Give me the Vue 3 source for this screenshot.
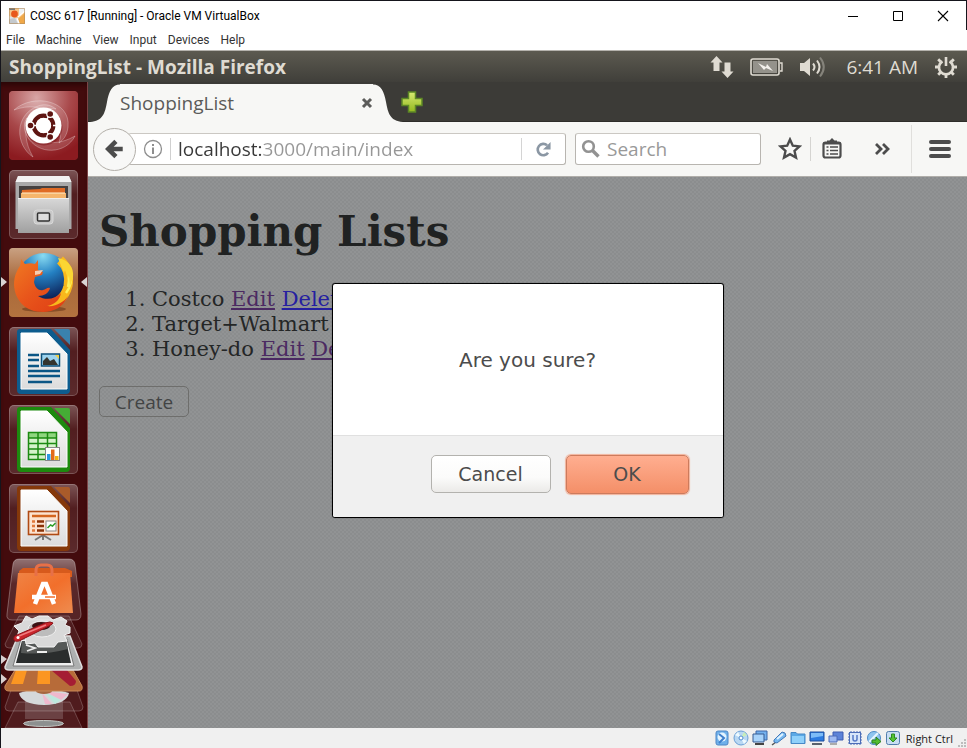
<script setup>
import { ref } from 'vue'

const menus = ['File', 'Machine', 'View', 'Input', 'Devices', 'Help']
const address = ref('localhost:3000/main/index')
const query = ref('')
const lists = [
  { id: 1, name: 'Costco', deleteSeen: false },
  { id: 2, name: 'Target+Walmart', deleteSeen: false },
  { id: 3, name: 'Honey-do', deleteSeen: true },
]
</script>

<template>
  <div class="window">
    <header class="titlebar">
      <svg class="vm-icon" viewBox="0 0 16 16" aria-hidden="true">
        <rect width="16" height="16" fill="#dfe3e6" />
        <path d="M0 0h16v6L9 11 0 8z" fill="#f5c68b" />
        <path d="M10 0h6v3l-6 5z" fill="#eef1f3" />
        <path d="M16 5v11h-5l-2-5z" fill="#f0a848" />
        <path d="M0 11l6-1 3 6H0z" fill="#c4c9cd" />
        <circle cx="5.500" cy="6" r="3.400" fill="#e8591c" />
        <path d="M0 0h6v2H0z" fill="#777" />
        <path d="M9 9l7-6M8 10l2 6" stroke="#fff" stroke-width="1.200" />
        <path d="M.5.5h15v15H.5z" fill="none" stroke="#b08a5c" stroke-opacity=".6" />
      </svg>
      <span class="vm-title">COSC 617 [Running] - Oracle VM VirtualBox</span>
      <div class="caption-buttons">
        <button aria-label="Minimize"><svg viewBox="0 0 12 12"><path d="M1 6.500h10" stroke="#000" /></svg></button>
        <button aria-label="Maximize"><svg viewBox="0 0 12 12"><path d="M1.500 1.500h9v9h-9z" stroke="#000" fill="none" /></svg></button>
        <button aria-label="Close"><svg viewBox="0 0 12 12"><path d="M1 1l10 10M11 1L1 11" stroke="#000" stroke-width="1.100" /></svg></button>
      </div>
    </header>
    <nav class="menubar" aria-label="Machine menu">
      <button v-for="m in menus" :key="m">{{ m }}</button>
    </nav>

    <div class="panel">
      <span class="panel-title">ShoppingList - Mozilla Firefox</span>
      <div class="indicators">
        <svg width="24" height="24" viewBox="0 0 24 24" fill="#dfdbd2" aria-label="Network">
          <path d="M6.500 1l6 6.500H9.500V16h-6V7.500H.5zM17.500 23l6-6.500H20.500V7.500h-6v9h-3z" />
        </svg>
        <svg width="33" height="18" viewBox="0 0 33 18" aria-label="Battery">
          <rect x="1" y="1" width="28" height="16" rx="2" fill="none" stroke="#dfdbd2" stroke-width="1.600" />
          <rect x="3" y="3" width="24" height="12" fill="#94928b" />
          <path d="M30 5h2v8h-2" fill="none" stroke="#dfdbd2" stroke-width="1.400" />
          <path d="M8 5l8 4 1-3 6 7-7-3-2 2z" fill="#f3f1ec" />
        </svg>
        <svg width="27" height="24" viewBox="0 0 27 24" fill="none" aria-label="Volume">
          <path d="M1 8h4l6-5v18l-6-5H1z" fill="#dfdbd2" />
          <path d="M14 8.500q3 3.500 0 7M18 5.500q5 6.500 0 13" stroke="#dfdbd2" stroke-width="2" />
          <path d="M21 2.500q7.500 9.500 0 19" stroke="#85837b" stroke-width="2" />
        </svg>
        <span class="clock">6:41 AM</span>
        <svg width="24" height="24" viewBox="0 0 24 24" fill="none" stroke="#dfdbd2" aria-label="Session">
          <path d="M8.500 6.300a7 7 0 1 0 7 0" stroke-width="2.600" />
          <path d="M12 2v9" stroke-width="2.600" />
          <path d="M12 19.500V23M1 12h3.500M19.500 12H23M4.200 4.200l2.500 2.500M19.800 4.200l-2.500 2.500M4.200 19.800l2.500-2.500M19.800 19.800l-2.500-2.500" stroke-width="2.800" />
        </svg>
      </div>
    </div>

    <div class="desktop">
      <aside class="launcher" aria-label="Launcher">
        <ul>
          <li>
            <button class="tile dash" aria-label="Dash">
              <svg viewBox="0 0 69 69">
                <defs>
                  <radialGradient id="dash-glow" cx=".4" cy=".1" r=".9">
                    <stop offset="0" stop-color="#d8a5a5" /><stop offset=".55" stop-color="#a8484a" /><stop offset="1" stop-color="#8c1b20" />
                  </radialGradient>
                </defs>
                <rect width="69" height="69" rx="4" fill="url(#dash-glow)" />
                <g fill="#fff" fill-opacity=".14" stroke="#fff" stroke-opacity=".28">
                  <path d="M5 19C24 2 62 9 59 36c-1 9-5 13-9 16 8-25-16-44-45-33z" />
                  <path d="M24 66C6 54 5 24 29 15c8-3 14 0 18 3-24-4-40 18-23 48z" />
                  <path d="M66 45c-9 18-37 20-48 0-4-8-3-14 0-18 0 18 20 34 48 18z" />
                </g>
                <circle cx="35" cy="36" r="18.500" fill="#7a1417" fill-opacity=".5" />
                <circle cx="34.500" cy="34.500" r="18" fill="#fff" />
                <circle cx="34.500" cy="34.500" r="9.800" fill="none" stroke="#5e1512" stroke-width="4.200" />
                <g stroke="#fff" stroke-width="1.500"><path d="M20 34.500h9M37 30l5-9M37 39l5 9M44 34.500h4" /></g>
                <circle cx="34.500" cy="34.500" r="7.500" fill="#fff" />
                <g fill="#5e1512" stroke="#fff" stroke-width="1.200"><circle cx="21.500" cy="34.500" r="3.400" /><circle cx="41.200" cy="23" r="3.400" /><circle cx="41.200" cy="46" r="3.400" /></g>
              </svg>
            </button>
          </li>
          <li>
            <button class="tile" aria-label="Files">
              <svg viewBox="0 0 69 69">
                <defs>
                  <linearGradient id="drawer" x2="0" y2="1"><stop stop-color="#d8d8d8" /><stop offset="1" stop-color="#a0a0a0" /></linearGradient>
                </defs>
                <path d="M9 6h51l2.500 6v47H6.500V12z" fill="#a9a9a9" />
                <path d="M9 6h51l2.500 6h-56z" fill="#f2f2f2" />
                <path d="M10 16h49v14H10z" fill="#454140" />
                <path d="M13 20l18-1 2-1h23v11H12z" fill="#df6b25" />
                <path d="M12 23h45v6H12z" fill="#f5b56c" /><path d="M13 23h43" stroke="#fff2cf" />
                <path d="M9 28l3 1h45l3-1v35H9z" fill="url(#drawer)" />
                <path d="M9 28.500h51" stroke="#eee" />
                <rect x="25" y="40" width="19" height="14" rx="3" fill="#c9c9c9" stroke="#d8d8d8" />
                <rect x="28.500" y="43" width="12" height="8" rx="1" fill="#ddd" stroke="#333" stroke-width="1.500" />
              </svg>
            </button>
          </li>
          <li class="running focused">
            <button class="tile firefox" aria-label="Firefox">
              <svg viewBox="0 0 69 69">
                <defs>
                  <linearGradient id="ff-tile" x2="0" y2="1"><stop stop-color="#c9a182" /><stop offset=".45" stop-color="#a8683a" /><stop offset="1" stop-color="#b3733f" /></linearGradient>
                  <radialGradient id="globe" cx=".48" cy=".05" r=".8"><stop stop-color="#8adcf2" /><stop offset=".45" stop-color="#2480c2" /><stop offset="1" stop-color="#0c2259" /></radialGradient>
                  <linearGradient id="fox" x1="0" y1="0" x2="1" y2="1"><stop stop-color="#f07a22" /><stop offset=".5" stop-color="#e8541b" /><stop offset="1" stop-color="#dd3c14" /></linearGradient>
                </defs>
                <ellipse cx="35" cy="60" rx="24" ry="4" fill="#5d2d12" opacity=".5" />
                <rect width="69" height="69" rx="4" fill="url(#ff-tile)" />
                <ellipse cx="35" cy="61" rx="22" ry="3" fill="#5d2d12" opacity=".5" />
                <circle cx="35" cy="32" r="27" fill="url(#globe)" />
                <path d="M51 12c7 6 10 16 8 26-3 12-12 19-23 19" fill="none" stroke="#f8b81c" stroke-width="9" />
                <path d="M54 15c6 8 7 16 5 24M62 25c1 9-1 15-5 20" fill="none" stroke="#fdf05c" stroke-width="2.500" />
                <path d="M49 10l6 15 1-3 3 9 1-4 1 11 3-9c1-9-4-17-15-19z" fill="#fbd633" />
                <path d="M5 37c0-9 3-15 6-19l1-7 4 5c4-1 7-1 10 0l3-4v10l5 2-1 3-7 2-1 5c1 6 5 9 9 8 3 0 4-3 7-2-1 5-6 8-12 8 8 5 17 3 23-3-1 7-7 12-14 13 9 1 17-4 21-10-5 11-14 16-25 16C17 64 6 53 5 37z" fill="url(#fox)" />
                <path d="M26 23l8-1-3 4-5 1z" fill="#f7cdb0" />
              </svg>
            </button>
          </li>
          <li>
            <button class="tile" aria-label="LibreOffice Writer">
              <svg viewBox="0 0 69 69">
                <defs><linearGradient id="paper" x2="0" y2="1"><stop stop-color="#fff" /><stop offset="1" stop-color="#dcdcdc" /></linearGradient></defs>
                <path d="M11 2h31l19 21v40a4 4 0 0 1-4 4H12a4 4 0 0 1-4-4V5a3 3 0 0 1 3-3z" fill="#0d5c8e" />
                <path d="M12 6h26l20 21v35H12z" fill="url(#paper)" stroke="#fff" />
                <path d="M45 2h14a2 2 0 0 1 2 2v14z" fill="#3a82ae" />
                <path d="M19 28h11M19 33h11M19 39h11M19 44h32M19 49h32M19 55h24" stroke="#0b5685" stroke-width="2.600" />
                <rect x="32.500" y="27" width="18" height="12" fill="#9cd3ee" stroke="#0b4f7a" stroke-width="1.500" />
                <path d="M34 38v-4l4-4 3 4 4-2 4 6z" fill="#34352f" /><path d="M46 28h4v4z" fill="#f2cf45" />
              </svg>
            </button>
          </li>
          <li>
            <button class="tile" aria-label="LibreOffice Calc">
              <svg viewBox="0 0 69 69">
                <path d="M11 2h31l19 21v40a4 4 0 0 1-4 4H12a4 4 0 0 1-4-4V5a3 3 0 0 1 3-3z" fill="#1d8a0e" />
                <path d="M12 6h26l20 21v35H12z" fill="url(#paper)" stroke="#fff" />
                <path d="M45 3h14a2 2 0 0 1 2 2v14z" fill="#45ad35" />
                <path d="M19 27h29v28H19z" fill="#d5f3ca" /><path d="M19 27h29v6H19z" fill="#8fd67f" />
                <path d="M19.500 27.500h28v27h-28zM29 27v28M38.500 27v28M19 33h29M19 38.500h29M19 44h29M19 49.500h29" fill="none" stroke="#1c8a12" stroke-width="1.500" />
                <rect x="36.500" y="42.500" width="14" height="13" fill="#fff" stroke="#888" />
                <path d="M38 49h3.500v6H38z" fill="#2b98e0" /><path d="M42 44.500h3.500V55H42z" fill="#e26a1b" /><path d="M46 51h3.500v4H46z" fill="#f0b414" />
              </svg>
            </button>
          </li>
          <li>
            <button class="tile" aria-label="LibreOffice Impress">
              <svg viewBox="0 0 69 69">
                <path d="M11 2h31l19 21v40a4 4 0 0 1-4 4H12a4 4 0 0 1-4-4V5a3 3 0 0 1 3-3z" fill="#85380a" />
                <path d="M12 6h26l20 21v35H12z" fill="url(#paper)" stroke="#fff" />
                <path d="M45 3h14a2 2 0 0 1 2 2v14z" fill="#a95b2a" />
                <path d="M34 50v6M34 51l-8 5M34 51l8 5" stroke="#777" stroke-width="2" />
                <rect x="19.500" y="27.500" width="30" height="23" fill="#fde3d0" stroke="#b04a14" stroke-width="1.600" />
                <path d="M23 32h24" stroke="#d4651f" stroke-width="2.500" />
                <path d="M23 37.500h3M23 42h3M23 46.500h3" stroke="#e0783a" stroke-width="2.500" />
                <path d="M28 37.500h7M28 42h7M28 46.500h7" stroke="#8a3206" stroke-width="2.500" />
                <rect x="37" y="37" width="10" height="10" fill="#fff" stroke="#888" />
                <path d="M38.500 44l3-3 2 1 3-3" stroke="#31a02c" stroke-width="1.500" fill="none" />
              </svg>
            </button>
          </li>
        </ul>
        <button class="stack" aria-label="More applications">
          <svg viewBox="0 0 86 170">
            <defs>
              <linearGradient id="bag" x2="1" y2="1"><stop stop-color="#ef8446" /><stop offset=".5" stop-color="#f26f2b" /><stop offset="1" stop-color="#ee8c50" /></linearGradient>
              <linearGradient id="sheen" x2="0" y2="1"><stop stop-color="#fff" stop-opacity=".42" /><stop offset=".4" stop-color="#fff" stop-opacity=".12" /><stop offset="1" stop-color="#fff" stop-opacity=".1" /></linearGradient>
            </defs>
            <g stroke="#fff" stroke-opacity=".22" fill="#fff" fill-opacity=".07">
              <path d="M17 144h52l12 26H4z" />
              <path d="M16 115h54l12 34q0 4-4 4H8q-4 0-4-4z" />
              <path d="M18 58h50l13 28q0 4-4 4H8q-4 0-4-4z" />
            </g>
            <path d="M24 130h38v31H24z" fill="#d9d9d9" opacity=".2" />
            <ellipse cx="42.500" cy="165.500" rx="20" ry="3" fill="#8d9090" stroke="#c5c9c6" />
            <path d="M18 135q25-8 50 0c-1 7-10 12-25 12s-24-5-25-12z" fill="#d5d9da" />
            <path d="M43 133l24 3-7 6zM41 135l10 11h-7z" fill="#efb9cd" /><path d="M43 134l17 8-6 4z" fill="#bce8dd" />
            <ellipse cx="43" cy="133" rx="8" ry="3" fill="#a5673f" />
            <path d="M14 112h58l9 16q1 5-3 5H8q-5 0-4-5z" fill="#b76b39" stroke="#c98a59" />
            <path d="M15 112h11l-4 14H10zM37 112h12v14H36z" fill="#fb9622" />
            <path d="M50 112h16l9 11q0 5-6 5z" fill="#a51d34" />
            <path d="M17 78h52l12 31q0 3-4 3H8q-4 0-4-3z" fill="#aeb0b0" stroke="#dedede" stroke-width="1.500" />
            <path d="M20 81h46l7 27H12z" fill="#efefef" stroke="#777" />
            <path d="M21 83h44l5 22H15z" fill="#2a2d2d" /><path d="M21 83h44l2 8q-23 6-47 4z" fill="#555857" />
            <path d="M25 87l9 3-8 3M36 94h10" stroke="#eee" stroke-width="1.800" fill="none" />
            <g transform="translate(0 11)">
              <path d="M25 47l6 3 7-3 9 0 5 4 8-3 6 4-2 4 5 2v6l-6 2 3 6-9 1-4 5H37l-3-4-9 1-1-6-8-2 2-5-5-5 8-3z" fill="#d9d9d9" stroke="#f3f3f3" />
              <ellipse cx="41" cy="60" rx="14" ry="8" fill="#bcbcbc" stroke="#eee" /><ellipse cx="40" cy="57" rx="9" ry="4" fill="#3b1013" />
            </g>
            <g transform="translate(0 7)">
              <path d="M48 61L18 76q-4 1-5-1-1-4 3-5l28-12q6-2 8 0 0 1-4 3z" fill="#c9252c" stroke="#8c1218" /><path d="M18 71l27-11" stroke="#f07d80" stroke-width="1.500" /><circle cx="17" cy="72.500" r="1.500" fill="#fff" />
            </g>
            <path d="M18 1h50q5 0 6 5l6 50q0 6-5 6H11q-6 0-5-6l6-50q1-5 6-5z" fill="url(#sheen)" stroke="#fff" stroke-opacity=".3" />
            <path d="M18 13l4-3h42l7 3v6H18z" fill="#d75a1c" />
            <path d="M17 15h52l3 40H13z" fill="url(#bag)" />
            <path d="M35 18v-6q0-5 5-5h6q5 0 5 5v6" fill="none" stroke="#e77048" stroke-width="3" />
            <path d="M34 46l8-20h3l8 20M31 39h24" fill="none" stroke="#fff" stroke-width="4.500" /><path d="M32 39h22" stroke="#f26f2b" stroke-width="1.500" /><path d="M32 39h12" stroke="#fff" stroke-width="3" />
            <path d="M0 97l6 4-6 5zM0 116l6 5-6 5z" fill="#d9cfcf" />
          </svg>
        </button>
      </aside>

      <section class="browser">
        <div class="tabs">
          <div class="tab">
            <svg class="curve" viewBox="0 0 30 38" aria-hidden="true"><path d="M0 38C13 37 15 29 17 18S22 .5 30 .5V38z" fill="#f7f7f5" /></svg>
            <div class="tab-body">
              <span>ShoppingList</span>
              <button class="close-tab" aria-label="Close tab"><svg viewBox="0 0 12 12"><path d="M2 2l8 8M10 2l-8 8" stroke="#5c5c5a" stroke-width="3" /></svg></button>
            </div>
            <svg class="curve" viewBox="0 0 30 38" aria-hidden="true"><path d="M30 38C17 37 15 29 13 18S8 .5 0 .5V38z" fill="#f7f7f5" /></svg>
          </div>
          <button class="new-tab" aria-label="New tab">
            <svg viewBox="0 0 22 22">
              <defs><linearGradient id="plus" x2="0" y2="1"><stop stop-color="#d8ea72" /><stop offset="1" stop-color="#93b81e" /></linearGradient></defs>
              <path d="M7.500 1h7v6.500H21v7h-6.500V21h-7v-6.500H1v-7h6.500z" fill="url(#plus)" stroke="#5c8726" stroke-width="1.500" />
            </svg>
          </button>
        </div>

        <div class="toolbar">
          <button class="back" aria-label="Back"><svg viewBox="0 0 22 22"><path d="M12 2.500L3.500 11l8.500 8.500M4 11h15.500" fill="none" stroke="#4c4c4c" stroke-width="5" /></svg></button>
          <div class="address">
            <svg class="info" viewBox="0 0 20 20" fill="none" stroke="#8e8e8e" aria-hidden="true"><circle cx="10" cy="10" r="8.500" stroke-width="1.300" /><path d="M10 8.500V15M10 5v2" stroke-width="2" /></svg>
            <input v-model="address" type="text" aria-label="Address">
            <button class="reload" aria-label="Reload"><svg viewBox="0 0 18 18"><path d="M13.800 12.500a6 6 0 1 1-1-8" fill="none" stroke="#8b97a4" stroke-width="2.800" /><path d="M16.500 1v8h-8z" fill="#8b97a4" /></svg></button>
          </div>
          <label class="search">
            <svg viewBox="0 0 20 20" fill="none" stroke="#929292" aria-hidden="true"><circle cx="7.500" cy="7.500" r="5.300" stroke-width="2.600" /><path d="M11.500 11.500l6 6" stroke-width="3.400" /></svg>
            <input v-model="query" type="search" placeholder="Search" aria-label="Search">
          </label>
          <button class="tool star" aria-label="Bookmark"><svg viewBox="0 0 24 24"><path d="M12 2.500l2.800 6.200 6.700.7-5 4.500 1.500 6.700-6-3.500-6 3.500 1.500-6.700-5-4.500 6.700-.7z" fill="none" stroke="#4c4c4c" stroke-width="2.400" /></svg></button>
          <button class="tool clip" aria-label="Show bookmarks"><svg viewBox="0 0 24 24" fill="none" stroke="#4c4c4c"><rect x="3.500" y="5.500" width="17" height="15" rx="2" stroke-width="2.200" /><path d="M7 5.500V3.500h2.500L12 1l2.500 2.500H17v2z" fill="#4c4c4c" stroke="none" /><path d="M3 6.500h18" stroke-width="2" /><path d="M6.500 10h2M10 10h8M6.500 13.500h2M10 13.500h8M6.500 17h2M10 17h8" stroke-width="1.600" /></svg></button>
          <button class="tool more" aria-label="More tools"><svg viewBox="0 0 24 24"><path d="M5 7l5 5-5 5M12 7l5 5-5 5" fill="none" stroke="#4c4c4c" stroke-width="2.800" /></svg></button>
          <button class="tool burger" aria-label="Open menu"><svg viewBox="0 0 24 24"><path d="M3 5h18M3 12h18M3 19h18" stroke="#4c4c4c" stroke-width="4" stroke-linecap="round" /></svg></button>
        </div>

        <div class="viewport">
          <main>
            <h1>Shopping Lists</h1>
            <ol>
              <li v-for="l in lists" :key="l.id">
                {{ l.name }} <a href="#edit">Edit</a> <a href="#delete" :class="{ fresh: !l.deleteSeen }">Delete</a>
              </li>
            </ol>
            <button class="create">Create</button>
          </main>
          <div class="overlay">
            <div class="dialog" role="alertdialog" aria-modal="true" aria-labelledby="question">
              <p id="question">Are you sure?</p>
              <div class="actions">
                <button>Cancel</button>
                <button class="ok">OK</button>
              </div>
            </div>
          </div>
        </div>
      </section>
    </div>

    <footer class="statusbar">
      <svg viewBox="0 0 16 16"><rect x="2" y="1" width="12" height="14" rx="2" fill="#6fb0ea" stroke="#4c86c6" /><circle cx="8" cy="7" r="4.500" fill="#e4f4ff" /><path d="M5 4l5 4-5 5" stroke="#3f7fcc" stroke-width="2" fill="none" /></svg>
      <svg viewBox="0 0 16 16"><circle cx="8" cy="8" r="7" fill="#b9d8f3" stroke="#6a9fd6" /><path d="M8 8L2 5l3-3zM8 8l6 3-3 3z" fill="#eefaff" /><path d="M8 8l3-6 3 3z" fill="#c8edb8" /><circle cx="8" cy="8" r="2" fill="#fff" stroke="#4d8bd0" /></svg>
      <svg viewBox="0 0 16 16"><path d="M4 1h11v9H4z" fill="#74b1ee" stroke="#3c67a8" /><path d="M1 4h11v8H1z" fill="#a8d3fb" stroke="#365a91" /><path d="M3 14h9" stroke="#444" stroke-width="2" /></svg>
      <svg viewBox="0 0 16 16"><path d="M1 15l4-3" stroke="#555" stroke-width="1.500" /><path d="M3 10L11 2l3 1 1 3-9 7-3-1z" fill="#75b8f0" stroke="#4479b8" /><path d="M6 9l6-5" stroke="#dff2ff" stroke-width="2" /></svg>
      <svg viewBox="0 0 16 16"><path d="M1 4V2.500h5L7.500 4H15v9.500H1z" fill="#5ba9e6" stroke="#4789c6" /><path d="M2 6h12v7H2z" fill="#8fd0fa" /></svg>
      <svg viewBox="0 0 16 16"><path d="M1 2h14v9H1z" fill="#2d7be0" stroke="#1f4f9b" /><path d="M2 3h12v3L2 8z" fill="#7dbcf8" /><path d="M3 14h10" stroke="#59616c" stroke-width="2" /></svg>
      <svg viewBox="0 0 16 16"><path d="M5 2h10v8H5z" fill="#5d83d8" stroke="#3f5cb0" /><path d="M1 6h8v6H1z" fill="#9db9f2" stroke="#4d6ab8" /><path d="M2 14h7" stroke="#666" /></svg>
      <svg viewBox="0 0 16 16"><path d="M1 4h14M1 7h14M1 10h14M1 13h14M4 1v14M7 1v14M10 1v14M13 1v14" stroke="#496dba" /><rect x="2.500" y="2.500" width="11" height="11" fill="#d7e6fa" stroke="#4c6db7" /><path d="M6 5v4q0 2 2 2t2-2V5" fill="none" stroke="#5679c6" stroke-width="1.500" /></svg>
      <svg viewBox="0 0 16 16"><circle cx="8" cy="8" r="6.500" fill="#8fc5ef" stroke="#4d8ac7" /><path d="M3 12L12 3" stroke="#e8f6ff" stroke-width="2" /><path d="M6 10h4V7l5 4.500-5 4V13H6z" fill="#52bd2f" stroke="#2a8022" /></svg>
      <svg viewBox="0 0 16 16"><rect x="1.500" y="1.500" width="13" height="13" rx="2" fill="#c8ddf3" stroke="#527dac" /><path d="M6.500 4h3v4H12l-4 4-4-4h2.500z" fill="#56c234" stroke="#2b8b20" /></svg>
      <span class="host-key">Right Ctrl</span>
      <svg class="grip" viewBox="0 0 10 10" fill="#bdbdbd"><path d="M7 1h2v2H7zM7 4h2v2H7zM4 4h2v2H4zM7 7h2v2H7zM4 7h2v2H4zM1 7h2v2H1z" /></svg>
    </footer>
  </div>
</template>

<style>
body { margin: 0; }
</style>

<style scoped>
* { box-sizing: border-box; }
button { border: 0; padding: 0; margin: 0; background: none; font: inherit; color: inherit; }
svg { display: block; }

.window {
  min-height: 100vh;
  display: flex;
  flex-direction: column;
  border-top: 1px solid #15151c;
  border-left: 1px solid #15151c;
  background: #fff;
  font-family: "Open Sans", "Noto Sans", sans-serif;
}
.titlebar { display: flex; align-items: center; height: 29px; padding-left: 8px; border-right: 1px solid #15151c; font: 12px Roboto, "Open Sans", sans-serif; color: #000; }
.vm-icon { width: 16px; height: 16px; margin-right: 5px; }
.caption-buttons { display: flex; margin-left: auto; padding-right: 1px; }
.caption-buttons button { display: grid; place-items: center; width: 45px; height: 28px; }
.caption-buttons svg { width: 12px; height: 12px; }
.menubar { display: flex; align-items: center; gap: 11px; height: 20px; padding-left: 5px; font: 12px/20px Roboto, "Open Sans", sans-serif; color: #333; }

.panel { display: flex; align-items: center; justify-content: space-between; height: 32px; padding: 0 9px 0 8px; border-top: 1px solid #b5b3ad; background: linear-gradient(#5c5a50, #403f3a); color: #dfdbd2; }
.panel-title { font-size: 19px; font-weight: 700; }
.indicators { display: flex; align-items: center; gap: 16px; }
.clock { font-size: 19px; margin-left: 4px; }

.desktop { flex: 1; display: flex; }
.launcher { display: flex; flex-direction: column; width: 87px; flex: none; background: #430b0d; border-right: 1px solid #7c4446; box-shadow: inset 0 6px 5px -3px #2a0606; }
.launcher ul { flex: 1; display: flex; flex-direction: column; justify-content: space-between; list-style: none; margin: 0; padding: 9px 0 5px; }
.launcher li { padding-left: 8px; position: relative; }
.tile { display: block; width: 69px; height: 69px; border-radius: 5px; background: linear-gradient(rgba(255, 255, 255, .3), rgba(255, 255, 255, .08) 35%, rgba(255, 255, 255, .13)); box-shadow: inset 0 0 0 1px rgba(255, 255, 255, .2); }
.tile svg { width: 69px; height: 69px; }
.running::before, .focused::after { content: ""; position: absolute; top: 29px; border: 5px solid transparent; }
.running::before { left: 0; border-left: 6px solid #d9d4d4; border-right: 0; }
.focused::after { right: 0; border-right: 6px solid #d9d4d4; border-left: 0; }
.stack svg { width: 86px; height: 170px; }

.browser { flex: 1; min-width: 0; display: flex; flex-direction: column; }
.tabs { display: flex; align-items: flex-end; height: 40px; padding-left: 2px; background: #3c3b37; border-bottom: 1px solid #2e2d2a; }
.tab { display: flex; flex: 0 1 313px; height: 38px; margin-bottom: -1px; }
.curve { width: 30px; height: 38px; flex: none; }
.tab-body { flex: 1; display: flex; align-items: center; justify-content: space-between; background: #f7f7f5; color: #5b5b59; font-size: 19px; }
.close-tab svg { width: 12px; height: 12px; }
.new-tab { height: 38px; padding-bottom: 1px; margin-left: -2px; }
.new-tab svg { width: 22px; height: 22px; }

.toolbar { display: flex; align-items: center; height: 55px; padding: 0 0 0 5px; background: #f7f7f5; border-bottom: 1px solid #b0aeaa; }
.back { display: grid; place-items: center; width: 43px; height: 43px; flex: none; border: 1px solid #b3afa9; border-radius: 50%; background: #f8f8f7; z-index: 1; }
.back svg { width: 20px; height: 20px; }
.address, .search { display: flex; align-items: center; height: 32px; border: 1px solid #b8b5b0; border-top-color: #cbc8c3; border-radius: 3px; background: #fff; }
.address { flex: 1; margin-left: -8px; padding-left: 14px; }
.info { width: 20px; height: 20px; flex: none; margin-right: 7px; }
.address input, .search input { min-width: 0; border: 0; padding: 0; outline: 0; background: none; font: 19px/28px "Open Sans", "Noto Sans", sans-serif; }
.address input { flex: 1; height: 22px; border-left: 1px solid #d0d0d0; padding-left: 7px; color: transparent; background: linear-gradient(90deg, #383838 92px, #979797 92px) text; }
.reload { display: grid; place-items: center; width: 44px; height: 22px; border-left: 1px solid #d4d4d4; }
.reload svg { width: 17px; height: 17px; }
.search { width: 186px; margin: 0 17px 0 9px; padding-left: 5px; }
.search svg { width: 20px; height: 20px; flex: none; margin-right: 6px; }
.search input { flex: 1; color: #444; }
.search input::placeholder { color: #999; opacity: 1; }
.tool { display: grid; place-items: center; height: 24px; }
.tool svg { width: 24px; height: 24px; }
.star { width: 33px; border-right: 1px solid #d5d4d1; padding-right: 8px; }
.clip { width: 41px; }
.more { width: 59px; padding-left: 3px; }
.burger { width: 56px; height: 48px; border-left: 1px solid #e0dfdc; }

.viewport { position: relative; flex: 1; background: repeating-conic-gradient(#8b8d8e 0 25%, #919394 0 50%) 0 0 / 4px 4px; }
main { padding: 29px 11px; font-family: "DejaVu Serif", serif; font-size: 21px; line-height: 25px; color: #242626; }
h1 { margin: 0; font-size: 42px; line-height: 52px; font-weight: 700; color: #202222; }
ol { margin: 29px 0 24px; padding-left: 53px; }
a { color: #4b2a62; }
a.fresh { color: #2520a0; }
.create { display: block; width: 90px; height: 31px; border: 1px solid #6e6e6c; border-radius: 5px; font: 19px "Open Sans", "Noto Sans", sans-serif; color: #424444; }
.overlay { position: absolute; inset: 0; display: flex; justify-content: center; align-items: flex-start; padding-top: 106px; }
.dialog { width: 392px; border: 1px solid #000; border-radius: 3px; background: #fff; font-family: "DejaVu Sans", sans-serif; color: #4c4c4c; box-shadow: 0 0 1px #333; overflow: hidden; }
.dialog p { margin: 0; padding: 64px 0 63px; font-size: 20px; line-height: 24px; text-align: center; }
.actions { display: flex; justify-content: flex-end; align-items: center; gap: 15px; height: 82px; padding: 0 34px 5px; border-top: 1px solid #e0e0e0; background: #f0f0f0; font-size: 19px; }
.actions button { width: 120px; height: 38px; border: 1px solid #b3b2ae; border-radius: 5px; background: linear-gradient(#fff, #fbfbfa 60%, #ebeae8); }
.actions .ok { width: 123px; height: 39px; border: 1px solid #cd7b5c; background: linear-gradient(#ffae90, #f48f68); box-shadow: 0 0 1px 1px #f2b29b; }

.statusbar { display: flex; align-items: center; justify-content: flex-end; gap: 3px; height: 20px; background: #f0f0f0; font-size: 11px; color: #222; }
.statusbar svg { width: 16px; height: 16px; }
.host-key { margin: 0 1px 0 2px; }
.statusbar .grip { width: 10px; height: 10px; align-self: flex-end; }
</style>
